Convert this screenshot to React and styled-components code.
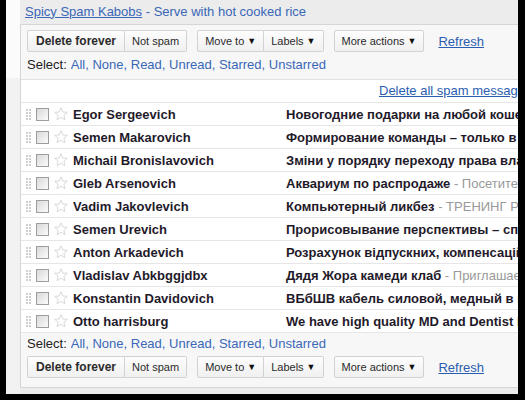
import styled, { createGlobalStyle } from "styled-components";

const GlobalStyle = createGlobalStyle`
  html, body {
    margin: 0;
    padding: 0;
    background: #000;
    overflow: hidden;
  }
  body {
    font-family: Arial, "Liberation Sans", sans-serif;
  }
`;

const Frame = styled.div`
  width: 525px;
  height: 400px;
  box-sizing: border-box;
  background: #000;
  padding: 0 7px 6px 6px;
`;

const Screen = styled.div`
  display: flex;
  height: 100%;
  background: #fff;
  overflow: hidden;
`;

const Gutter = styled.div`
  flex: 0 0 14px;
  display: flex;
  flex-direction: column;
`;

const GutterTop = styled.div`
  height: 78px;
  background: #fbfbfb;
`;

const GutterRest = styled.div`
  flex: 1;
  background: #f2f2f2;
`;

const Main = styled.div`
  flex: 1;
  min-width: 0;
  display: flex;
  flex-direction: column;
  background: #ececec;
`;

const Clip = styled.div`
  height: 24px;
  padding: 0 0 2px 5px;
  box-sizing: border-box;
  display: flex;
  align-items: center;
  font-size: 13px;
  color: #3a67b8;
  white-space: nowrap;
`;

const Link = styled.a`
  color: ${(p) => p.$color || "#2a5db0"};
  text-decoration: ${(p) => (p.$plain ? "none" : "underline")};
  cursor: pointer;
`;

const Panel = styled.div`
  width: 640px;
  height: 364px;
  box-sizing: border-box;
  border: 1px solid #d6d6d6;
  border-right: none;
  background: #f7f7f7;
  display: flex;
  flex-direction: column;
`;

const Toolbar = styled.div`
  display: flex;
  flex-direction: ${(p) => (p.$bottom ? "column-reverse" : "column")};
  gap: ${(p) => (p.$bottom ? "4px" : "5px")};
  padding: ${(p) => (p.$bottom ? "3px 6px 9px" : "5px 6px 6px")};
  border-bottom: ${(p) => (p.$bottom ? "none" : "1px solid #e2e2e2")};
`;

const Actions = styled.div`
  display: flex;
  align-items: center;
  gap: 10px;
`;

const Group = styled.div`
  display: flex;
`;

const Btn = styled.button`
  height: 22px;
  padding: ${(p) => (p.$strong ? "0 8px" : "0 7px")};
  margin: 0;
  font-family: Arial, "Liberation Sans", sans-serif;
  font-size: ${(p) => (p.$strong ? "12px" : "11px")};
  font-weight: ${(p) => (p.$strong ? 700 : 400)};
  color: #2b2b2b;
  background: linear-gradient(#fdfdfd, #f0f0f0);
  border: 1px solid #d2d2d2;
  border-radius: 2px;
  white-space: nowrap;

  & + & {
    border-left: none;
  }
  &:first-child:not(:last-child) {
    border-radius: 2px 0 0 2px;
  }
  &:last-child:not(:first-child) {
    border-radius: 0 2px 2px 0;
  }
`;

const Arrow = styled.span`
  font-size: 9px;
  margin-left: 3px;
  color: #111;
  vertical-align: 1px;
`;

const Refresh = styled(Link)`
  font-size: 13px;
  margin-left: 4px;
`;

const SelectLine = styled.div`
  height: 16px;
  line-height: 16px;
  font-size: 13px;
  color: #222;
  white-space: nowrap;
`;

const SelectLinks = styled.span`
  color: #3a67b8;
  margin-left: 4px;
`;

const Rows = styled.div`
  background: #fff;
`;

const Notice = styled.div`
  height: 22px;
  line-height: 22px;
  padding-left: 358px;
  font-size: 13px;
  white-space: nowrap;
  border-bottom: 1px solid #e6e6e6;
`;

const Row = styled.div`
  height: 22px;
  display: flex;
  align-items: center;
  padding-left: 5px;
  border-bottom: 1px solid #e6e6e6;
  white-space: nowrap;
  font-size: 13px;
  color: #1f1a2a;
`;

const Handle = styled.svg`
  flex: 0 0 6px;
  margin-right: 4px;
`;

const Check = styled.span`
  flex: 0 0 13px;
  height: 13px;
  box-sizing: border-box;
  border: 1px solid #9d9d9d;
  background: linear-gradient(135deg, #d9d9d9, #fbfbfb);
  margin-right: 5px;
`;

const Star = styled.svg`
  flex: 0 0 14px;
  margin-right: 5px;
`;

const Name = styled.span`
  flex: 0 0 213px;
  font-weight: 700;
  overflow: hidden;
`;

const Subject = styled.span`
  font-weight: 700;
`;

const Snippet = styled.span`
  color: #999;
  font-weight: 400;
`;

const messages = [
  ["Egor Sergeevich", "Новогодние подарки на любой кошелёк и вкус", ""],
  ["Semen Makarovich", "Формирование команды – только в январе", ""],
  ["Michail Bronislavovich", "Зміни у порядку переходу права власності", ""],
  ["Gleb Arsenovich", "Аквариум по распродаже", "Посетите наш магазин"],
  ["Vadim Jakovlevich", "Компьютерный ликбез", "ТРЕНИНГ РАБОТЫ НА ПК"],
  ["Semen Urevich", "Прорисовывание перспективы – специальный курс", ""],
  ["Anton Arkadevich", "Розрахунок відпускних, компенсацій", ""],
  ["Vladislav Abkbggjdbx", "Дядя Жора камеди клаб", "Приглашаем на концерт"],
  ["Konstantin Davidovich", "ВБбШВ кабель силовой, медный в наличии", ""],
  ["Otto harrisburg", "We have high quality MD and Dentist lists", ""],
];

const selectors = ["All", "None", "Read", "Unread", "Starred", "Unstarred"];

const DragDots = () => (
  <Handle width="6" height="12" viewBox="0 0 6 12">
    {[0, 3, 6, 9].map((y) =>
      [0, 3].map((x) => (
        <rect key={`${x}-${y}`} x={x} y={y + 1} width="2" height="2" fill="#cfcfcf" />
      ))
    )}
  </Handle>
);

const StarIcon = () => (
  <Star width="14" height="14" viewBox="0 0 14 14">
    <path
      d="M7 0.8 L8.8 5 L13.3 5.3 L9.9 8.2 L10.9 12.7 L7 10.3 L3.1 12.7 L4.1 8.2 L0.7 5.3 L5.2 5 Z"
      fill="none"
      stroke="#d4d4d4"
      strokeWidth="0.9"
      strokeLinejoin="round"
    />
  </Star>
);

const ActionBar = () => (
  <Actions>
    <Group>
      <Btn $strong>Delete forever</Btn>
      <Btn>Not spam</Btn>
    </Group>
    <Group>
      <Btn>
        Move to<Arrow>▼</Arrow>
      </Btn>
      <Btn>
        Labels<Arrow>▼</Arrow>
      </Btn>
    </Group>
    <Group>
      <Btn>
        More actions<Arrow>▼</Arrow>
      </Btn>
    </Group>
    <Refresh>Refresh</Refresh>
  </Actions>
);

const SelectBar = () => (
  <SelectLine>
    Select:
    <SelectLinks>
      {selectors.map((s, i) => (
        <span key={s}>
          <Link $plain $color="#3a67b8">
            {s}
          </Link>
          {i < selectors.length - 1 ? ", " : ""}
        </span>
      ))}
    </SelectLinks>
  </SelectLine>
);

export default function App() {
  return (
    <Frame>
      <GlobalStyle />
      <Screen>
        <Gutter>
          <GutterTop />
          <GutterRest />
        </Gutter>
        <Main>
          <Clip>
            <Link $color="#3a67b8">Spicy Spam Kabobs</Link>
            &nbsp;- Serve with hot cooked rice
          </Clip>
          <Panel>
            <Toolbar>
              <ActionBar />
              <SelectBar />
            </Toolbar>
            <Rows>
              <Notice>
                <Link>Delete all spam messages now</Link>
              </Notice>
              {messages.map(([name, subject, snippet]) => (
                <Row key={name}>
                  <DragDots />
                  <Check />
                  <StarIcon />
                  <Name>{name}</Name>
                  <Subject>
                    {subject}
                    {snippet && <Snippet> - {snippet}</Snippet>}
                  </Subject>
                </Row>
              ))}
            </Rows>
            <Toolbar $bottom>
              <ActionBar />
              <SelectBar />
            </Toolbar>
          </Panel>
        </Main>
      </Screen>
    </Frame>
  );
}
